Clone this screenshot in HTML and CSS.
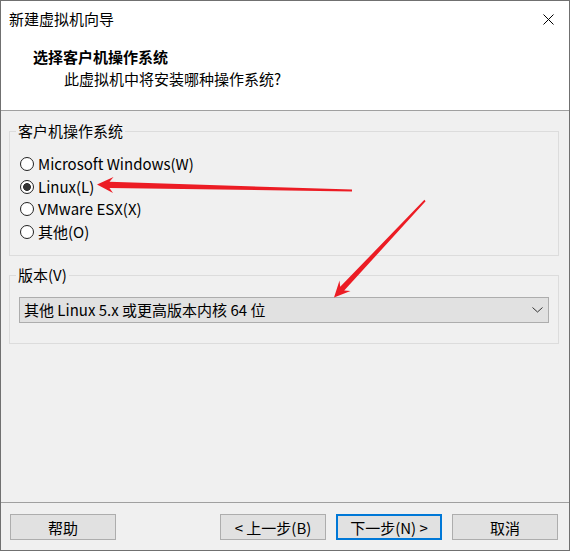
FILE: index.html
```html
<!DOCTYPE html>
<html lang="zh-CN">
<head>
    <meta charset="UTF-8">
    <meta name="viewport" content="width=device-width, initial-scale=1.0">
    <title>新建虚拟机向导</title>
    <link rel="stylesheet" href="styles.css">
</head>
<body>
    <div class="window">
        <div class="top">
            <div class="titlebar">
                <span>新建虚拟机向导</span>
                <button class="close" type="button" aria-label="关闭">
                    <svg width="11" height="11" viewBox="0 0 11 11">
                        <path d="M0.5 0.5 L10.5 10.5 M10.5 0.5 L0.5 10.5" stroke="#000" stroke-width="1" fill="none" />
                    </svg>
                </button>
            </div>
            <div class="header">
                <h1>选择客户机操作系统</h1>
                <p>此虚拟机中将安装哪种操作系统?</p>
            </div>
        </div>

        <div class="content">
            <fieldset class="group os-group">
                <legend>客户机操作系统</legend>
                <label class="radio"><input type="radio" name="os" value="windows" /> Microsoft Windows(W)</label>
                <label class="radio"><input type="radio" name="os" value="linux" checked /> Linux(L)</label>
                <label class="radio"><input type="radio" name="os" value="esx" /> VMware ESX(X)</label>
                <label class="radio"><input type="radio" name="os" value="other" /> 其他(O)</label>
            </fieldset>

            <fieldset class="group version-group">
                <legend>版本(V)</legend>
                <div class="combo">
                    <span>其他 Linux 5.x 或更高版本内核 64 位</span>
                    <svg width="11" height="6" viewBox="0 0 11 6">
                        <path d="M0.5 0.5 L5.5 5 L10.5 0.5" stroke="#333" stroke-width="1" fill="none" />
                    </svg>
                </div>
            </fieldset>
        </div>

        <div class="footer">
            <button class="btn" type="button">帮助</button>
            <div class="nav">
                <button class="btn" type="button">&lt; 上一步(B)</button>
                <button class="btn default" type="button">下一步(N) &gt;</button>
                <button class="btn" type="button">取消</button>
            </div>
        </div>

        <!-- annotation arrows drawn over the dialog -->
        <svg class="arrows" width="570" height="551" viewBox="0 0 570 551">
            <polygon fill="#ec1c24" points="97,184.5 113.5,177 109.5,181.8 352,189.6 352,191.4 109.5,188 113,193" />
            <polygon fill="#ec1c24" points="334,297.5 339.5,280.5 340.2,286.8 424.4,199.8 425.6,201.2 344.2,290.6 350.5,291" />
        </svg>
    </div>
</body>
</html>
```

FILE: styles.css
```css
* {
    padding: 0;
    margin: 0;
    box-sizing: border-box;
}
body {
    background: #f0f0f0;
    font-family: "Noto Sans CJK SC", sans-serif;
    font-size: 15px;
    line-height: 20px;
    color: #000;
}
.window {
    position: relative;
    width: 570px;
    height: 551px;
    border: 1px solid #707070;
    display: flex;
    flex-direction: column;
    background: #f0f0f0;
}
.top {
    background: #fff;
    height: 110px;
    border-bottom: 1px solid #a0a0a0;
}
.titlebar {
    height: 36px;
    display: flex;
    align-items: center;
    justify-content: space-between;
    padding-left: 8px;
}
.close {
    border: none;
    background: none;
    width: 11px;
    height: 11px;
    margin-right: 15px;
    display: flex;
}
.header {
    padding-left: 32px;
}
.header h1 {
    font-size: 15px;
    font-weight: bold;
    margin-top: 10px;
}
.header p {
    margin-top: 2px;
    padding-left: 31px;
}
.content {
    flex: 1;
    padding: 10px 10px 0 8px;
    display: flex;
    flex-direction: column;
    row-gap: 9px;
}
.group {
    border: 1px solid #dcdcdc;
    min-width: 0;
    padding-left: 0;
    padding-right: 0;
}
.group legend {
    margin-left: 6px;
    padding: 0 2px;
}
.os-group {
    padding-top: 12px;
    padding-bottom: 12px;
}
.radio {
    height: 22.5px;
    display: flex;
    align-items: center;
    column-gap: 4px;
    margin-left: 10px;
}
.radio input {
    appearance: none;
    flex: none;
    width: 14px;
    height: 14px;
    border: 1px solid #222;
    border-radius: 50%;
    background: #fff;
    margin: 0;
}
.radio input:checked {
    background: radial-gradient(circle, #333 0 3.6px, #fff 4.2px);
}
.version-group {
    padding-top: 12px;
    padding-bottom: 20px;
}
.combo {
    height: 26px;
    margin: 0 9px;
    background: #e1e1e1;
    border: 1px solid #adadad;
    display: flex;
    align-items: center;
    justify-content: space-between;
    padding: 0 5px 0 4px;
}
.footer {
    border-top: 1px solid #a0a0a0;
    padding: 11px 11px 10px 9px;
    display: flex;
    justify-content: space-between;
}
.nav {
    display: flex;
    column-gap: 10px;
}
.btn {
    width: 106px;
    height: 26px;
    background: #e1e1e1;
    border: 1px solid #adadad;
    font-family: inherit;
    font-size: 15px;
    color: #000;
}
.btn.default {
    border: 2px solid #0078d7;
}
.arrows {
    position: absolute;
    top: -1px;
    left: -1px;
    pointer-events: none;
}
```
